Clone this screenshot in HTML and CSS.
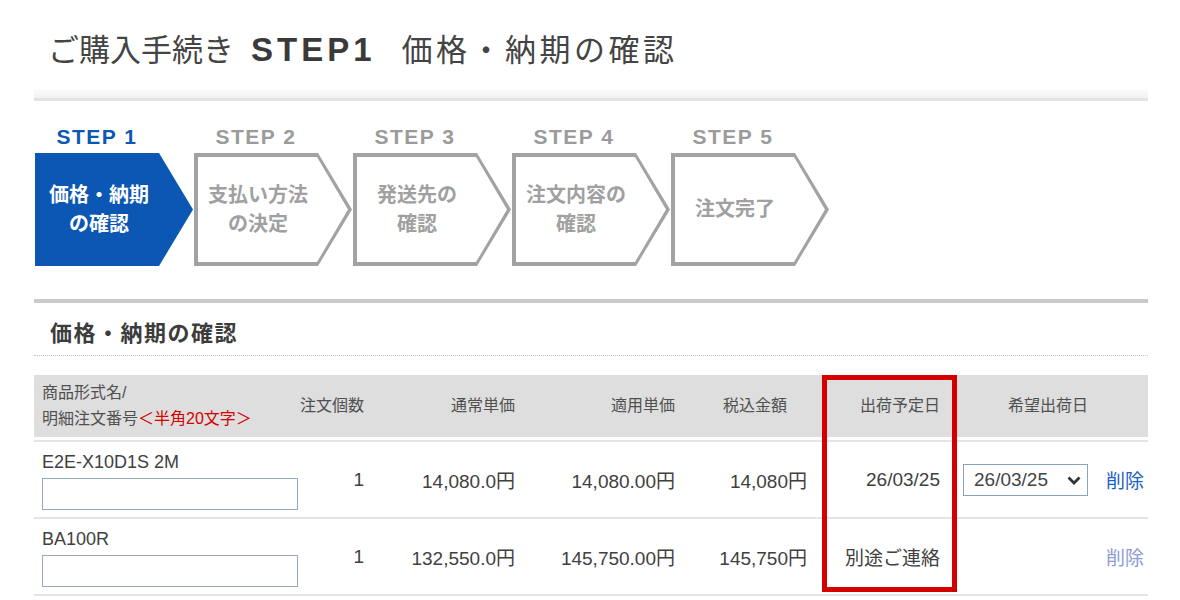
FILE: index.html
```html
<!DOCTYPE html>
<html lang="ja">
<head>
    <meta charset="UTF-8">
    <title>ご購入手続き STEP1 価格・納期の確認</title>
    <link rel="stylesheet" href="styles.css">
</head>
<body>
<div class="wrap">
    <h1 class="page-title">ご購入手続き<b>STEP1</b><span class="sub">価格・納期の確認</span></h1>
    <div class="title-rule"></div>

    <!-- 手続きステップ -->
    <ol class="steps">
        <li class="step cur">
            <span class="step-no">STEP 1</span>
            <div class="step-box"><div class="step-in"><span>価格・納期<br>の確認</span></div></div>
        </li>
        <li class="step">
            <span class="step-no">STEP 2</span>
            <div class="step-box"><div class="step-in"><span>支払い方法<br>の決定</span></div></div>
        </li>
        <li class="step">
            <span class="step-no">STEP 3</span>
            <div class="step-box"><div class="step-in"><span>発送先の<br>確認</span></div></div>
        </li>
        <li class="step">
            <span class="step-no">STEP 4</span>
            <div class="step-box"><div class="step-in"><span>注文内容の<br>確認</span></div></div>
        </li>
        <li class="step">
            <span class="step-no">STEP 5</span>
            <div class="step-box"><div class="step-in"><span>注文完了</span></div></div>
        </li>
    </ol>

    <div class="sec-rule"></div>
    <h2 class="sec-title">価格・納期の確認</h2>

    <div class="order">
        <table class="order-table">
            <colgroup>
                <col class="c-name"><col class="c-qty"><col class="c-list"><col class="c-unit">
                <col class="c-total"><col class="c-ship"><col class="c-hope"><col class="c-del">
            </colgroup>
            <thead>
            <tr>
                <th class="th-name">商品形式名/<br>明細注文番号<em>＜半角20文字＞</em></th>
                <th>注文個数</th>
                <th>通常単価</th>
                <th>適用単価</th>
                <th class="th-total">税込金額</th>
                <th class="th-ship">出荷予定日</th>
                <th class="th-hope" colspan="2">希望出荷日</th>
            </tr>
            </thead>
            <tbody>
            <tr>
                <td class="name">
                    <div class="model">E2E-X10D1S 2M</div>
                    <input type="text" class="memo">
                </td>
                <td class="num">1</td>
                <td class="num">14,080.0円</td>
                <td class="num">14,080.00円</td>
                <td class="num">14,080円</td>
                <td class="num ship">26/03/25</td>
                <td class="hope">
                    <span class="sel">
                        <select><option>26/03/25</option></select>
                        <svg class="sel-arrow" width="14" height="9" viewBox="0 0 14 9"><path d="M1.5 1.5 L7 7 L12.5 1.5" fill="none" stroke="#333" stroke-width="2.8"/></svg>
                    </span>
                </td>
                <td class="del"><a href="#">削除</a></td>
            </tr>
            <tr>
                <td class="name">
                    <div class="model">BA100R</div>
                    <input type="text" class="memo">
                </td>
                <td class="num">1</td>
                <td class="num">132,550.0円</td>
                <td class="num">145,750.00円</td>
                <td class="num">145,750円</td>
                <td class="num ship">別途ご連絡</td>
                <td class="hope"></td>
                <td class="del"><a href="#" class="off">削除</a></td>
            </tr>
            </tbody>
        </table>
        <!-- 出荷予定日の強調枠 -->
        <div class="mark"></div>
    </div>
</div>
</body>
</html>
```

FILE: styles.css
```css
html, body{
    margin: 0;
    padding: 0;
    background: #fff;
    font-family: "Liberation Sans", "Noto Sans CJK JP", sans-serif;
    color: #444;
}

.wrap{
    margin-left: 34px;
    width: 1114px;
}

/* ページタイトル */
.page-title{
    margin: 0 0 18px;
    padding: 30px 0 0 14px;
    font-size: 31px;
    line-height: 40px;
    font-weight: normal;
    color: #444;
    white-space: nowrap;
}

.page-title b{
    margin: 0 26px 0 17px;
    font-size: 33px;
    letter-spacing: 4px;
    color: #3a3a3a;
}

.page-title .sub{
    letter-spacing: 3.5px;
}

.title-rule{
    height: 9px;
    background: linear-gradient(#fbfbfb, #f2f2f2);
    border-bottom: 3px solid #e3e3e3;
}

/* ステップ */
.steps{
    display: flex;
    gap: 1px;
    margin: 0 0 0 1px;
    padding: 24px 0 0;
    list-style: none;
}

.step{
    display: flex;
    flex-direction: column;
    width: 158px;
}

.step-no{
    width: 124px;
    height: 24px;
    margin-bottom: 4px;
    text-align: center;
    font-size: 21px;
    line-height: 24px;
    font-weight: bold;
    letter-spacing: 1.5px;
    color: #9b9b9b;
}

.step-box{
    width: 158px;
    height: 113px;
    padding: 4px;
    box-sizing: border-box;
    background: #a2a2a2;
    clip-path: polygon(0 0, 124px 0, 100% 50%, 124px 100%, 0 100%);
}

.step-in{
    display: flex;
    align-items: center;
    justify-content: center;
    height: 100%;
    padding-right: 30px;
    box-sizing: border-box;
    background: #fff;
    clip-path: polygon(0 0, calc(100% - 31px) 0, 100% 50%, calc(100% - 31px) 100%, 0 100%);
    text-align: center;
    font-size: 20px;
    line-height: 29px;
    font-weight: bold;
    color: #a0a0a0;
    white-space: nowrap;
}

.cur .step-no{
    color: #0b57b3;
}

.cur .step-box,
.cur .step-in{
    background: #0b57b3;
}

.cur .step-in{
    color: #fff;
}

/* 見出し */
.sec-rule{
    height: 4px;
    margin-top: 33px;
    background: #cacaca;
}

.sec-title{
    margin: 16px 0 0;
    padding: 0 0 6px 16px;
    font-size: 22px;
    line-height: 30px;
    font-weight: bold;
    letter-spacing: 1.5px;
    color: #3c3c3c;
    border-bottom: 1px dotted #c4c4c4;
}

/* 注文テーブル */
.order{
    position: relative;
    margin-top: 19px;
}

.order-table{
    width: 1114px;
    table-layout: fixed;
    border-collapse: separate;
    border-spacing: 0;
}

.c-name{ width: 266px; }
.c-qty{ width: 72px; }
.c-list{ width: 151px; }
.c-unit{ width: 160px; }
.c-total{ width: 132px; }
.c-ship{ width: 143px; }
.c-hope{ width: 140px; }
.c-del{ width: 50px; }

.order-table th{
    height: 65px;
    padding: 0 8px 0 0;
    box-sizing: border-box;
    background: #dedede;
    border-bottom: 3px solid #fff;
    text-align: right;
    font-size: 16px;
    line-height: 26px;
    font-weight: normal;
    color: #505050;
    white-space: nowrap;
}

.order-table th.th-name{
    padding-left: 8px;
    text-align: left;
}

.th-name em{
    font-style: normal;
    color: #d20000;
}

.order-table th.th-total{
    padding-right: 28px;
}

.order-table th.th-ship{
    padding-right: 18px;
}

.order-table th.th-hope{
    padding-right: 10px;
    text-align: center;
}

.order-table td{
    height: 77px;
    padding: 0 8px 0 0;
    box-sizing: border-box;
    border-top: 2px solid #e4e4e4;
    vertical-align: middle;
    font-size: 19px;
    color: #404040;
    white-space: nowrap;
}

.order-table tr:last-child td{
    border-bottom: 2px solid #e4e4e4;
}

.order-table td.name{
    padding: 9px 0 7px 8px;
    vertical-align: top;
}

.model{
    font-size: 18px;
    line-height: 22px;
}

.memo{
    display: block;
    width: 256px;
    height: 32px;
    margin: 5px 0 0;
    padding: 0;
    box-sizing: border-box;
    border: 1px solid #93a8c6;
    border-radius: 0;
    background: #fff;
}

.num{
    text-align: right;
}

.order-table td.ship{
    padding-right: 18px;
}

.order-table td.hope{
    padding: 0 0 0 5px;
}

.sel{
    position: relative;
    display: block;
    width: 125px;
    height: 32px;
}

.sel select{
    width: 125px;
    height: 32px;
    margin: 0;
    padding: 0 0 0 10px;
    border: 1px solid #8aa2c4;
    border-radius: 0;
    background: #fff;
    font-family: "Liberation Sans", sans-serif;
    font-size: 19px;
    color: #444;
    -webkit-appearance: none;
    appearance: none;
}

.sel-arrow{
    position: absolute;
    top: 12px;
    right: 7px;
    pointer-events: none;
}

.order-table td.del{
    padding: 0 0 0 8px;
    font-size: 19px;
}

.del a{
    color: #1a5fc6;
    text-decoration: none;
}

.del a.off{
    color: #8d9cd3;
}

.mark{
    position: absolute;
    top: 0;
    left: 788px;
    width: 135px;
    height: 217px;
    border: 5px solid #d40000;
    box-sizing: border-box;
    pointer-events: none;
}
```
